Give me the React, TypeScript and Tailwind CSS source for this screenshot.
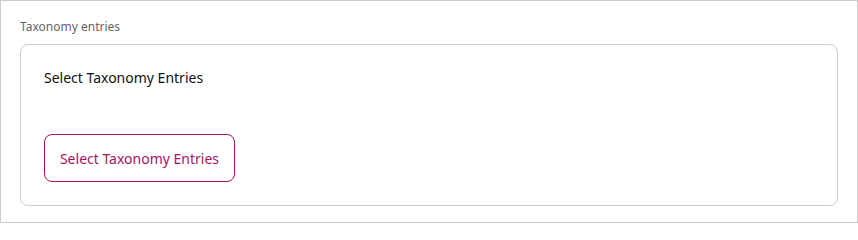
export default function App() {
  return (
    <div className="w-[858px] h-[223px] bg-white border border-[#cccccc] px-[19px] pt-[17px] pb-[16px] font-['Noto_Sans',sans-serif]">
      <div className="text-[12px] leading-[18px] text-[#5f6570]">Taxonomy entries</div>
      <div className="mt-[8px] border border-[#cccccc] rounded-lg p-[23px]">
        <div className="text-[14px] leading-[20px] text-[#111111]">Select Taxonomy Entries</div>
        <button className="mt-[46px] w-[191px] h-[48px] border border-[#a8145c] rounded-lg text-[14px] text-[#a8145c] bg-white">
          Select Taxonomy Entries
        </button>
      </div>
    </div>
  );
}
